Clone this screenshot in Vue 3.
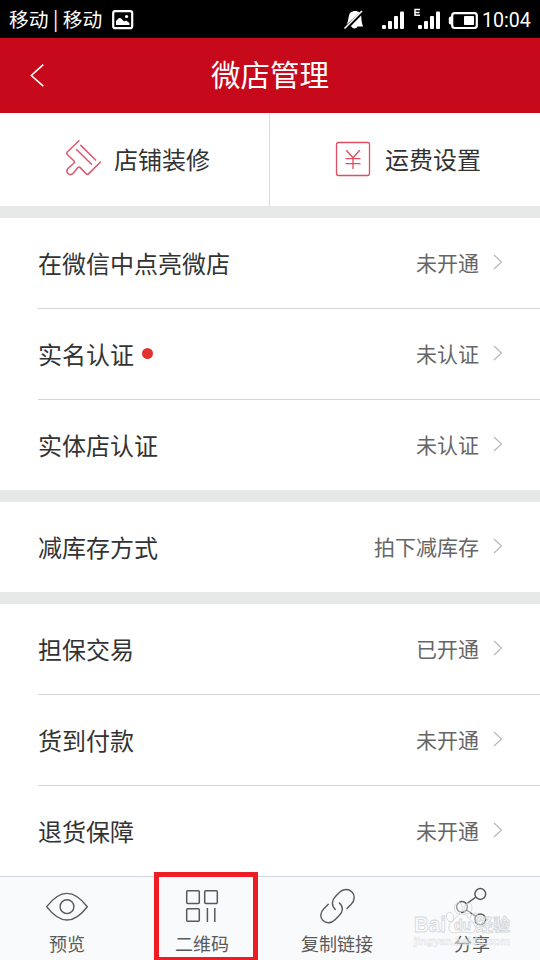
<script setup>
const groups = [
  [
    { label: '在微信中点亮微店', value: '未开通' },
    { label: '实名认证', value: '未认证', dot: true },
    { label: '实体店认证', value: '未认证' },
  ],
  [{ label: '减库存方式', value: '拍下减库存' }],
  [
    { label: '担保交易', value: '已开通' },
    { label: '货到付款', value: '未开通' },
    { label: '退货保障', value: '未开通' },
  ],
]
const tabs = [
  { name: 'preview', label: '预览' },
  { name: 'qr', label: '二维码', marked: true },
  { name: 'link', label: '复制链接' },
  { name: 'share', label: '分享' },
]
</script>

<template>
  <div class="screen">
    <div class="status">
      <span class="carrier">移动 | 移动</span>
      <svg class="picture" width="22" height="20" viewBox="0 0 22 20">
        <rect x="1.2" y="1.2" width="19" height="17" rx="2" fill="none" stroke="#fff" stroke-width="2.2" />
        <path d="M4 15V11L7 8L9 8.2L12 11.5L14 10.5L17.5 13V15Z" fill="#fff" />
        <circle cx="14.6" cy="6.5" r="1.6" fill="#fff" />
      </svg>
      <svg class="indicators" width="136" height="26" viewBox="343 6 136 26">
        <path d="M346.5 24.5C349 21 348 15 350.5 12.5C353 10.5 357 10.3 360 12.5Z" fill="#fff" />
        <path d="M361.2 15.5C361.5 20 361.5 22 363 26.5H357.5C356.5 29 352.5 29 351.5 26.5H350.5Z" fill="#fff" />
        <path d="M344.5 28.5L362 11" stroke="#fff" stroke-width="1.6" />
        <g fill="#fff">
          <rect x="382" y="25" width="4" height="4" rx="1.2" />
          <rect x="388" y="21" width="4" height="8" rx="1" />
          <rect x="394" y="16" width="4" height="13" rx="1" />
          <rect x="400" y="11.5" width="4" height="17.5" rx="1" />
          <rect x="418" y="25" width="4" height="4" rx="1.2" />
          <rect x="424" y="21" width="4" height="8" rx="1" />
          <rect x="430" y="16" width="4" height="13" rx="1" />
          <rect x="436" y="11.5" width="4" height="17.5" rx="1" />
        </g>
        <path d="M420 9.4H415V15.3H420M415 12.4H419.5" fill="none" stroke="#fff" stroke-width="1.5" />
        <rect x="452.2" y="13.2" width="24.6" height="14.8" rx="2.5" fill="none" stroke="#fff" stroke-width="2.2" />
        <path d="M452 16.5H450.5Q448.8 16.5 448.8 18.5V22.5Q448.8 24.5 450.5 24.5H452Z" fill="#fff" />
        <rect x="464" y="16" width="10" height="9" rx=".8" fill="#fff" />
      </svg>
      <span class="time">10:04</span>
    </div>

    <header class="header">
      <svg class="back" width="16" height="26" viewBox="0 0 16 26">
        <path d="M13.3 2.7L1.3 13.5L13.3 24.2" fill="none" stroke="#fff" stroke-width="1.6" />
      </svg>
      <h1>微店管理</h1>
    </header>

    <div class="actions">
      <div class="action">
        <svg width="38" height="38" viewBox="65 139 38 38" fill="none" stroke="#e0566a" stroke-width="1.5" stroke-linecap="round" stroke-linejoin="round">
          <path d="M79 140.8L67.3 152Q66.3 153.3 67.3 154.5L73.8 160.7Q75 162 73.8 163.2L68.2 168.2C64.7 171.8 69.5 176.8 73.2 173.2L77.8 167.6Q79 166.4 80.2 167.6L86 173.6Q87.4 174.9 88.7 173.6L100.5 162" />
          <path d="M80.8 145.4L95.6 160M76.5 149.5L91.5 164.2" />
        </svg>
        <span>店铺装修</span>
      </div>
      <div class="action shipping">
        <svg width="36" height="36" viewBox="335 141 36 36" fill="none" stroke="#dc4e60">
          <rect x="336.5" y="142.5" width="33" height="33" rx="2" stroke-width="1.3" />
          <path d="M346.3 150.2L353 157.8L359.8 150.2M353 157.8V169M345.5 158.6H360.5M345.5 163.6H360.5" stroke-width="1.3" />
        </svg>
        <span>运费设置</span>
      </div>
    </div>

    <section v-for="(group, i) in groups" :key="i" class="group">
      <div v-for="row in group" :key="row.label" class="row">
        <span class="label">{{ row.label }}</span>
        <i v-if="row.dot" class="dot"></i>
        <span class="value">{{ row.value }}</span>
        <svg class="chevron" width="10" height="16" viewBox="0 0 10 16">
          <path d="M1 1L8.5 8L1 15" fill="none" stroke="#b5b5b5" stroke-width="1.1" />
        </svg>
      </div>
    </section>

    <nav class="tabs">
      <div v-for="tab in tabs" :key="tab.name" class="tab" :class="{ marked: tab.marked }">
        <svg v-if="tab.name === 'preview'" width="44" height="40" viewBox="45 887 44 40" fill="none" stroke="#57595b" stroke-width="1.4">
          <path d="M46.7 906.7Q66.9 880 87.3 906.7Q66.9 933.4 46.7 906.7Z" stroke-linejoin="round" />
          <circle cx="67" cy="906.7" r="6.9" />
        </svg>
        <svg v-else-if="tab.name === 'qr'" width="44" height="40" viewBox="180 887 44 40" fill="none" stroke="#57595b" stroke-width="1.5">
          <rect x="186.7" y="890.8" width="12.6" height="12.6" rx="1" />
          <rect x="204.7" y="890.8" width="12.6" height="12.6" rx="1" />
          <rect x="186.7" y="908.7" width="12.6" height="12.6" rx="1" />
          <path d="M207.4 908V922M214.8 908V922" />
        </svg>
        <svg v-else-if="tab.name === 'link'" width="44" height="40" viewBox="315 887 44 40" fill="none" stroke="#57595b" stroke-width="1.4" stroke-linecap="round">
          <path d="M347 908.5L351.2 904.3C355.2 900.2 355 894.8 351.8 891.7C348.5 888.5 343.2 888.7 339.6 892.2L335.4 896.4C331.7 900.2 331.2 905.6 335.2 909.4" />
          <path d="M328.3 904.2L323.8 908.7C320 912.5 319.8 917.6 323 920.6C326.3 923.8 331.4 923.4 335 919.7L339.2 915.4C343.2 911.5 343.6 906.8 339.4 903" />
        </svg>
        <svg v-else width="44" height="40" viewBox="450 887 44 40" fill="none" stroke="#57595b" stroke-width="1.5">
          <circle cx="480.3" cy="894" r="5.4" />
          <circle cx="462" cy="907" r="5.4" />
          <circle cx="480.3" cy="919.3" r="5.4" />
          <path d="M475.9 897L466.6 903.8M466.5 910L475.9 916.3" />
        </svg>
        <span>{{ tab.label }}</span>
      </div>
    </nav>

    <svg class="watermark" width="110" height="56" viewBox="409 898 110 56">
      <g fill="#fff" fill-opacity=".4" stroke="#d3d5d7" stroke-width=".9">
        <ellipse cx="450" cy="917" rx="3.6" ry="4.8" transform="rotate(-20 450 917)" />
        <ellipse cx="458.3" cy="908" rx="4" ry="5.6" />
        <ellipse cx="468" cy="908.5" rx="3.8" ry="5.5" transform="rotate(15 468 908.5)" />
        <ellipse cx="474" cy="917.5" rx="3.6" ry="4.8" transform="rotate(25 474 917.5)" />
        <path d="M462 914C457 914 455.5 919 451.5 922.5C446 927.5 449.5 934.5 456 932.5C460 931.8 464 931.8 468 932.5C475 934.5 478 927 472.5 922.5C468.5 919 467 914 462 914Z" />
      </g>
      <text class="latin" x="414" y="931.5" font-size="22" textLength="32" lengthAdjust="spacingAndGlyphs">Bai</text>
      <text class="latin" x="454" y="930" font-size="14">du</text>
      <text class="cjk" x="476" y="931" font-size="17">经验</text>
      <text class="latin url" x="414" y="944.5" font-size="11.5" textLength="96" lengthAdjust="spacingAndGlyphs">jingyan.baidu.com</text>
    </svg>
  </div>
</template>

<style>
body {
  margin: 0;
  background: #fff;
}
</style>

<style scoped>
.screen {
  position: relative;
  width: 540px;
  height: 960px;
  overflow: hidden;
  display: flex;
  flex-direction: column;
  background: #fff;
  color: #333;
  font-family: "Noto Sans CJK SC", sans-serif;
}
svg {
  display: block;
  flex: none;
}
.status {
  height: 38px;
  flex: none;
  display: flex;
  align-items: center;
  box-sizing: border-box;
  padding: 0 8px 0 9px;
  background: #000;
  color: #fff;
}
.carrier {
  width: 103px;
  padding-bottom: 1px;
  font-size: 19.8px;
  line-height: 37px;
  white-space: pre;
}
.picture {
  margin-top: 1px;
}
.indicators {
  margin-left: auto;
}
.time {
  width: 50px;
  margin-left: 3px;
  padding-top: 4px;
  font: 19.6px/34px Roboto, sans-serif;
}
.header {
  height: 75px;
  flex: none;
  display: grid;
  grid-template-columns: 60px 1fr 60px;
  align-items: center;
  background: #c60a1c;
  color: #fff;
}
.back {
  margin-left: 30px;
  margin-bottom: 2px;
}
h1 {
  margin: 0;
  padding-bottom: 4px;
  font-size: 29.5px;
  font-weight: 400;
  line-height: 71px;
  text-align: center;
}
.actions {
  height: 93px;
  flex: none;
  display: grid;
  grid-template-columns: 270px 270px;
}
.action {
  display: flex;
  align-items: center;
  gap: 11px;
  box-sizing: border-box;
  padding: 0 0 2px 65px;
  border-right: 1px solid #dcdcdc;
  font-size: 24px;
}
.action:first-child svg {
  margin-bottom: 2px;
}
.action.shipping {
  gap: 14px;
  border-right: 0;
}
.group {
  flex: none;
  border-top: 12px solid #e6e8e7;
}
.row {
  display: flex;
  align-items: center;
  box-sizing: border-box;
  height: 91px;
  margin-left: 38px;
  padding: 0 37px 2px 0;
  border-bottom: 1px solid #d5d5d5;
}
.row:last-child {
  height: 90px;
  border-bottom: 0;
}
.label {
  font-size: 24px;
}
.dot {
  width: 11px;
  height: 11px;
  margin-left: 8px;
  border-radius: 50%;
  background: #e4332f;
}
.value {
  margin-left: auto;
  font-size: 21px;
  color: #666;
}
.chevron {
  margin-left: 14px;
}
.tabs {
  flex: 1;
  display: grid;
  grid-template-columns: repeat(4, 1fr);
  border-top: 1px solid #d3d6d8;
  background: #f9fafc;
}
.tab {
  position: relative;
  display: flex;
  flex-direction: column;
  align-items: center;
  padding: 10px 1px 0 0;
  font-size: 18px;
  line-height: 32px;
  color: #5a5a5a;
}
.tab svg {
  margin-right: 1px;
}
.marked::after {
  content: "";
  position: absolute;
  box-sizing: border-box;
  left: 19px;
  top: -5px;
  width: 104px;
  height: 90px;
  border: 5px solid #ee1c25;
}
.watermark {
  position: absolute;
  left: 409px;
  top: 898px;
}
.watermark text {
  fill: #fff;
  fill-opacity: 0.45;
  stroke: #d3d5d7;
  stroke-width: 0.8px;
  font-weight: 700;
}
.watermark .url {
  fill-opacity: 0.3;
  stroke: #dfe1e3;
  stroke-width: 0.5px;
}
.latin {
  font-family: "Liberation Sans", sans-serif;
}
.cjk {
  font-family: "Noto Sans CJK SC", sans-serif;
}
</style>
